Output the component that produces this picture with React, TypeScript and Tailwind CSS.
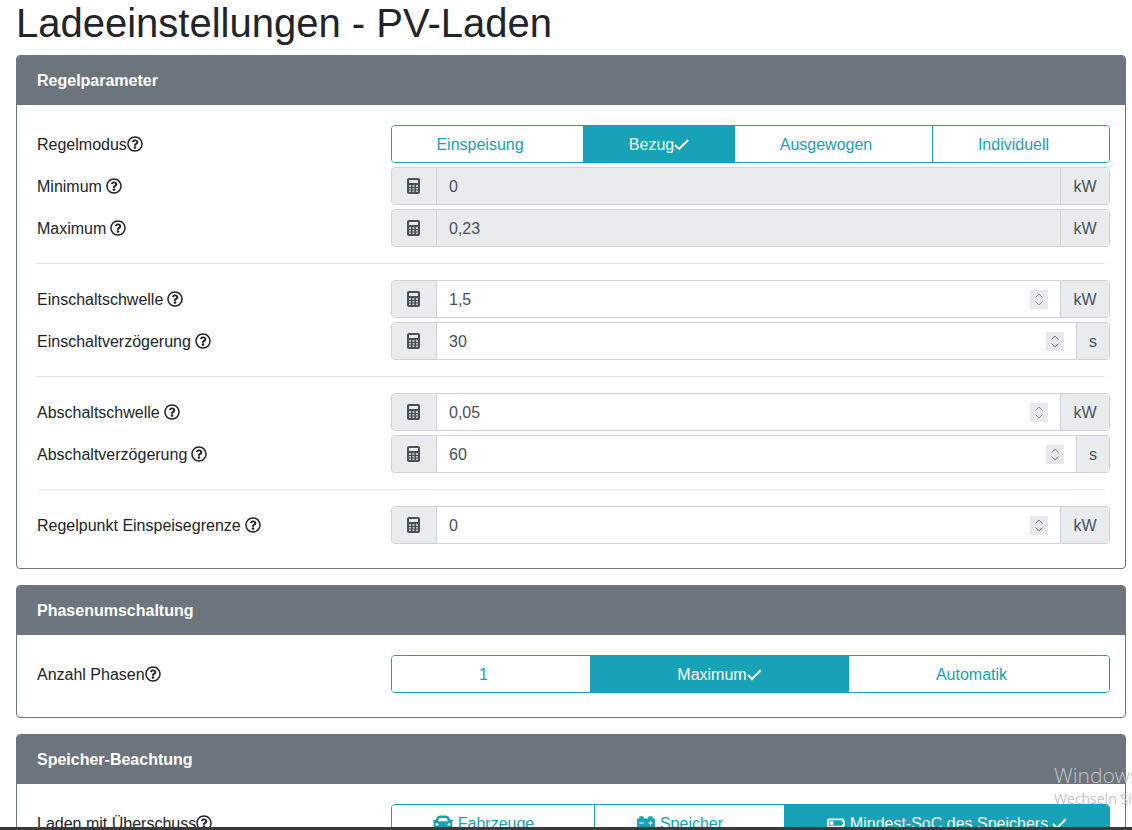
import { FaBatteryQuarter, FaCar, FaCarBattery, FaRegQuestionCircle } from 'react-icons/fa';
import type { ReactNode } from 'react';

type Segment = { label: string; width: string; active?: boolean; icon?: ReactNode };

function Check({ className }: { className: string }) {
  return (
    <svg viewBox="0 0 15 15" className={`h-[15px] w-[15px] ${className}`} fill="none" stroke="currentColor" strokeWidth="2">
      <path d="M1 8l4 4 9-9" />
    </svg>
  );
}

function Calculator() {
  return (
    <svg viewBox="0 0 13 16" className="h-4 w-[13px]">
      <rect width="13" height="16" rx="2" fill="#495057" />
      <rect x="2" y="2" width="9" height="3" fill="#e9ecef" />
      <path d="M2 7h2v2H2zM5.500 7h2v2h-2zM9 7h2v2H9zM2 10h2v1.500H2zM5.500 10h2v1.500h-2zM9 10h2v1.500H9zM2 12.500h2V14H2zM5.500 12.500h2V14h-2zM9 12.500h2V14H9z" fill="#c3c7cb" />
    </svg>
  );
}

function Label({ text, spaced = true }: { text: string; spaced?: boolean }) {
  return (
    <div className="flex w-[354px] shrink-0 items-center">
      <span className="pt-[2px]">{text}</span>
      <FaRegQuestionCircle className={`h-4 w-4 text-[#212529] ${spaced ? 'ml-1' : ''}`} />
    </div>
  );
}

function ButtonGroup({ segments, checkGap = '' }: { segments: Segment[]; checkGap?: string }) {
  return (
    <div className="flex h-[38px] flex-1 overflow-hidden rounded border border-[#17a2b8]">
      {segments.map((item, index) => (
        <div
          key={item.label}
          className={`flex items-center justify-center ${item.width} ${index > 0 ? 'border-l border-[#17a2b8]' : ''} ${
            item.active ? 'bg-[#17a2b8] text-white' : 'bg-white text-[#17a2b8]'
          }`}
        >
          {item.icon}
          <span className="pt-[2px]">{item.label}</span>
          <Check className={`${checkGap} ${item.active ? '' : 'invisible'}`} />
        </div>
      ))}
    </div>
  );
}

function NumberRow({ label, value, unit, disabled = false }: { label: string; value: string; unit: string; disabled?: boolean }) {
  return (
    <div className="-mr-[5px] mb-1 flex h-[38px] items-center">
      <Label text={label} />
      <div className="flex h-[38px] flex-1 rounded border border-[#ced4da] text-[#495057]">
        <div className="flex w-[45px] items-center justify-center rounded-l-[3px] border-r border-[#ced4da] bg-[#e9ecef] pr-px">
          <Calculator />
        </div>
        <div className={`flex flex-1 items-center justify-between px-3 ${disabled ? 'bg-[#e9ecef]' : 'bg-white'}`}>
          <span className="pt-[2px]">{value}</span>
          {disabled ? null : (
            <svg viewBox="0 0 18 19" className="h-[19px] w-[18px] bg-[#e9e9ed]" fill="none" stroke="#8f8f9d" strokeWidth="1">
              <path d="M5.500 7.500 9 4l3.500 3.500M5.500 11.500 9 15l3.500-3.500" />
            </svg>
          )}
        </div>
        <div
          className={`flex items-center justify-center rounded-r-[3px] border-l border-[#ced4da] bg-[#e9ecef] pt-[2px] ${
            unit === 'kW' ? 'w-[49px]' : 'px-3'
          }`}
        >
          {unit}
        </div>
      </div>
    </div>
  );
}

function Card({ title, children }: { title: string; children: ReactNode }) {
  return (
    <section className="mb-4 overflow-hidden rounded border border-[#6c757d] bg-white">
      <div className="flex h-[49px] items-center bg-[#6c757d] px-5 font-bold text-white">{title}</div>
      <div className="p-5">{children}</div>
    </section>
  );
}

function Divider() {
  return <hr className="my-4 border-[#e5e5e5]" />;
}

export default function App() {
  return (
    <div className="relative h-[830px] overflow-hidden bg-white font-['Liberation_Sans',Arial,sans-serif] text-base text-[#212529]">
      <div className="pl-4 pr-[6px]">
        <h1 className="mb-2 h-[47px] text-[40px] leading-[46px]">Ladeeinstellungen - PV-Laden</h1>

        <Card title="Regelparameter">
          <div className="-mr-[5px] mb-1 flex h-[38px] items-center">
            <Label text="Regelmodus" spaced={false} />
            <ButtonGroup
              segments={[
                { label: 'Einspeisung', width: 'w-[191px]' },
                { label: 'Bezug', width: 'w-[151px]', active: true },
                { label: 'Ausgewogen', width: 'w-[198px]' },
                { label: 'Individuell', width: 'flex-1' },
              ]}
            />
          </div>
          <NumberRow label="Minimum" value="0" unit="kW" disabled />
          <NumberRow label="Maximum" value="0,23" unit="kW" disabled />
          <Divider />
          <NumberRow label="Einschaltschwelle" value="1,5" unit="kW" />
          <NumberRow label="Einschaltverzögerung" value="30" unit="s" />
          <Divider />
          <NumberRow label="Abschaltschwelle" value="0,05" unit="kW" />
          <NumberRow label="Abschaltverzögerung" value="60" unit="s" />
          <Divider />
          <NumberRow label="Regelpunkt Einspeisegrenze" value="0" unit="kW" />
        </Card>

        <Card title="Phasenumschaltung">
          <div className="-mr-[5px] mb-1 flex h-[38px] items-center">
            <Label text="Anzahl Phasen" spaced={false} />
            <ButtonGroup
              segments={[
                { label: '1', width: 'w-[198px]' },
                { label: 'Maximum', width: 'w-[258px]', active: true },
                { label: 'Automatik', width: 'flex-1' },
              ]}
            />
          </div>
        </Card>

        <Card title="Speicher-Beachtung">
          <div className="-mr-[5px] mb-1 flex h-[38px] items-center">
            <Label text="Laden mit Überschuss" spaced={false} />
            <ButtonGroup
              checkGap="ml-1"
              segments={[
                { label: 'Fahrzeuge', width: 'w-[202px]', icon: <FaCar className="mr-[5px] h-5 w-5" /> },
                { label: 'Speicher', width: 'w-[190px]', icon: <FaCarBattery className="mr-[5px] h-[18px] w-[18px]" /> },
                { label: 'Mindest-SoC des Speichers', width: 'flex-1', active: true, icon: <FaBatteryQuarter className="mr-[5px] h-[18px] w-[18px]" /> },
              ]}
            />
          </div>
        </Card>
      </div>

      <div className="absolute left-[1054px] top-[761px] whitespace-nowrap font-['Open_Sans',sans-serif] text-[21px] font-light leading-7 text-[#c4c4c4]">Windows</div>
      <div className="absolute left-[1054px] top-[789px] whitespace-nowrap font-['Open_Sans',sans-serif] text-sm leading-5 text-[#c4c4c4]">Wechseln Sie</div>
      <div className="absolute inset-x-0 bottom-0 h-[3px] bg-[#3a3a3a]" />
    </div>
  );
}
